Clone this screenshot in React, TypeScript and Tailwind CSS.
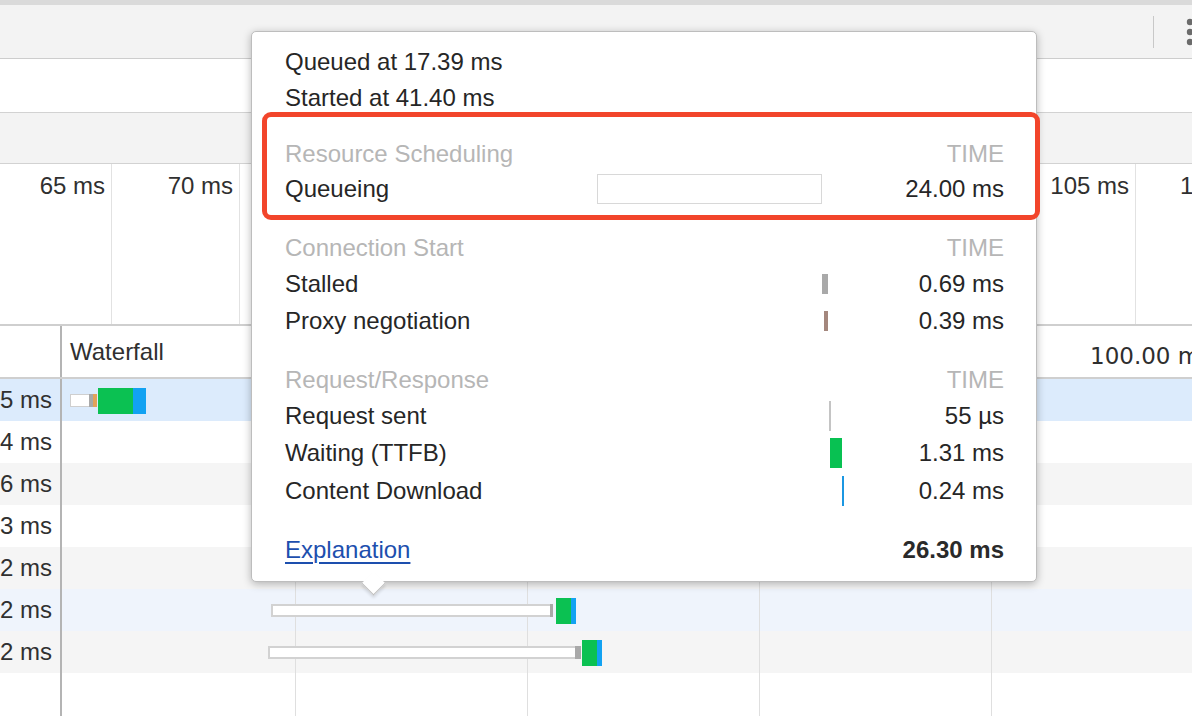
import React from "react";

type PRowProps = {
  h: string;
  label: string;
  time?: string;
  bar?: React.ReactNode;
  head?: boolean;
  extra?: string;
};

function PRow({ h, label, time, bar, head, extra = "" }: PRowProps) {
  return (
    <div className={`flex items-center ${h} ${extra}`}>
      <div className={`w-[312px] whitespace-nowrap ${head ? "text-[#b6b6b6]" : "text-[#262626]"}`}>{label}</div>
      <div className="w-[253px] h-full flex items-center">{bar}</div>
      <div className={`w-[154px] text-right whitespace-nowrap ${head ? "text-[#b6b6b6]" : "text-[#262626]"}`}>{time}</div>
    </div>
  );
}

const overview = ["70 ms", "75 ms", "80 ms", "85 ms", "90 ms", "95 ms", "100 ms", "105 ms", "110 ms"];

const rows = [
  { t: "5 ms", bg: "bg-[#dcebfc]" },
  { t: "4 ms", bg: "bg-white" },
  { t: "6 ms", bg: "bg-[#f5f5f5]" },
  { t: "3 ms", bg: "bg-white" },
  { t: "2 ms", bg: "bg-[#f5f5f5]" },
  { t: "2 ms", bg: "bg-[#eff4fc]" },
  { t: "2 ms", bg: "bg-[#f5f5f5]" },
];

function WaterfallBars({ i }: { i: number }) {
  if (i === 0) {
    return (
      <>
        <div className="absolute left-[8px] top-[15px] w-[20px] h-[13px] bg-white border border-[#cfcfcf] z-10" />
        <div className="absolute left-[27px] top-[15px] w-[4px] h-[13px] bg-[#a9a9a9] z-10" />
        <div className="absolute left-[31px] top-[15px] w-[4px] h-[13px] bg-[#e2a35a] z-10" />
        <div className="absolute left-[36px] top-[9px] w-[35px] h-[26px] bg-[#0bc152] z-10" />
        <div className="absolute left-[71px] top-[9px] w-[13px] h-[26px] bg-[#12a2f2] z-10" />
      </>
    );
  }
  if (i === 5) {
    return (
      <>
        <div className="absolute left-[209px] top-[15px] w-[281px] h-[13px] bg-white border-2 border-[#d2d2d2] z-10" />
        <div className="absolute left-[488px] top-[15px] w-[3px] h-[13px] bg-[#a9a9a9] z-10" />
        <div className="absolute left-[494px] top-[9px] w-[15px] h-[26px] bg-[#0bc152] z-10" />
        <div className="absolute left-[509px] top-[9px] w-[5px] h-[26px] bg-[#12a2f2] z-10" />
      </>
    );
  }
  if (i === 6) {
    return (
      <>
        <div className="absolute left-[206px] top-[15px] w-[309px] h-[13px] bg-white border-2 border-[#d2d2d2] z-10" />
        <div className="absolute left-[513px] top-[15px] w-[6px] h-[13px] bg-[#a9a9a9] z-10" />
        <div className="absolute left-[520px] top-[9px] w-[15px] h-[26px] bg-[#0bc152] z-10" />
        <div className="absolute left-[535px] top-[9px] w-[5px] h-[26px] bg-[#12a2f2] z-10" />
      </>
    );
  }
  return null;
}

export default function App() {
  return (
    <div className="relative w-[1192px] h-[716px] overflow-hidden bg-white font-['Liberation_Sans',Arial,sans-serif] text-[24px] text-[#303030] flex flex-col">
      {/* top strip */}
      <div className="h-[5px] bg-[#dadada] shrink-0" />
      {/* toolbar */}
      <div className="h-[54px] shrink-0 bg-[#f3f3f3] border-b border-[#cdcdcd] flex items-center">
        <div className="flex-1" />
        <div className="w-px h-[32px] bg-[#c8c8c8] shrink-0" />
        <div className="w-[38px] shrink-0 h-full flex items-center pl-[31px]">
          <svg width="10" height="30" viewBox="0 0 10 30" className="shrink-0 overflow-visible">
            <circle cx="5" cy="5" r="3.2" fill="#6b6b6b" />
            <circle cx="5" cy="15" r="3.2" fill="#6b6b6b" />
            <circle cx="5" cy="25" r="3.2" fill="#6b6b6b" />
          </svg>
        </div>
      </div>
      {/* filter bar */}
      <div className="h-[54px] shrink-0 bg-white border-b border-[#d2d2d2]" />
      {/* gray bar */}
      <div className="h-[51px] shrink-0 bg-[#f3f3f3] border-b border-[#d2d2d2]" />
      {/* overview */}
      <div className="h-[162px] shrink-0 border-b-2 border-[#cfcfcf] flex">
        <div className="w-[112px] shrink-0 border-r border-[#e2e2e2] text-right pr-[6px] pt-[4px]">65 ms</div>
        {overview.map((l) => (
          <div key={l} className="w-[128px] shrink-0 border-r border-[#e2e2e2] text-right pr-[6px] pt-[4px] whitespace-nowrap">
            {l}
          </div>
        ))}
      </div>
      {/* table header */}
      <div className="h-[53px] shrink-0 flex border-b-2 border-[#cfcfcf]">
        <div className="w-[62px] shrink-0 border-r-2 border-[#b4b4b4]" />
        <div className="flex items-center">
          <div className="w-[1028px] shrink-0 pl-[8px]">Waterfall</div>
          <div className="shrink-0 whitespace-nowrap font-['DejaVu_Sans',sans-serif] text-[23px] text-[#2e2e2e] pt-[9px]">100.00 ms</div>
        </div>
      </div>
      {/* body */}
      <div className="relative flex-1 flex flex-col">
        {rows.map((r, i) => (
          <div key={i} className={`h-[42px] shrink-0 flex ${r.bg}`}>
            <div className="w-[62px] shrink-0 border-r-2 border-[#b4b4b4] text-right pr-[8px] flex items-center justify-end">
              {r.t}
            </div>
            <div className="relative flex-1">
              <WaterfallBars i={i} />
            </div>
          </div>
        ))}
        <div className="flex-1 flex">
          <div className="w-[62px] shrink-0 border-r-2 border-[#b4b4b4]" />
        </div>
        {/* waterfall grid lines */}
        <div className="absolute left-[295px] top-0 bottom-0 w-px bg-[#dfdfdf] z-[5]" />
        <div className="absolute left-[527px] top-0 bottom-0 w-px bg-[#dfdfdf] z-[5]" />
        <div className="absolute left-[759px] top-0 bottom-0 w-px bg-[#dfdfdf] z-[5]" />
        <div className="absolute left-[991px] top-0 bottom-0 w-px bg-[#dfdfdf] z-[5]" />
      </div>

      {/* popup */}
      <div className="absolute left-[251px] top-[31px] w-[786px] h-[551px] z-30 bg-white border border-[#bdbdbd] rounded-[5px] shadow-[0_2px_8px_rgba(0,0,0,0.28)] pt-[12px] pl-[33px] pr-[32px] flex flex-col">
        <div className="h-[36px] flex items-center text-[#262626]">Queued at 17.39 ms</div>
        <div className="h-[36px] flex items-center text-[#262626]">Started at 41.40 ms</div>
        <PRow h="h-[36px]" extra="mt-[20px]" head label="Resource Scheduling" time="TIME" />
        <PRow
          h="h-[34px]"
          label="Queueing"
          time="24.00 ms"
          bar={<div className="w-[225px] h-[30px] bg-white border border-[#d8d8d8]" />}
        />
        <PRow h="h-[36px]" extra="mt-[24px]" head label="Connection Start" time="TIME" />
        <PRow
          h="h-[36px]"
          label="Stalled"
          time="0.69 ms"
          bar={<div className="ml-[225px] w-[6px] h-[20px] bg-[#a9a9a9]" />}
        />
        <PRow
          h="h-[38px]"
          label="Proxy negotiation"
          time="0.39 ms"
          bar={<div className="ml-[227px] w-[4px] h-[20px] bg-[#a4877d]" />}
        />
        <PRow h="h-[36px]" extra="mt-[22px]" head label="Request/Response" time="TIME" />
        <PRow
          h="h-[36px]"
          label="Request sent"
          time="55 µs"
          bar={<div className="ml-[232px] w-[2px] h-[30px] bg-[#c4c4c4]" />}
        />
        <PRow
          h="h-[38px]"
          label="Waiting (TTFB)"
          time="1.31 ms"
          bar={<div className="ml-[233px] w-[12px] h-[30px] bg-[#08c152]" />}
        />
        <PRow
          h="h-[38px]"
          label="Content Download"
          time="0.24 ms"
          bar={<div className="ml-[245px] w-[2px] h-[30px] bg-[#1b97e2]" />}
        />
        <div className="mt-[22px] h-[36px] flex items-center justify-between">
          <span className="text-[#1d4fae] underline decoration-[2px] underline-offset-[4px]">Explanation</span>
          <span className="font-bold text-[#2a2a2a]">26.30 ms</span>
        </div>

        {/* red annotation box */}
        <div className="absolute left-[10px] top-[80px] w-[778px] h-[108px] border-[5px] border-[#f2452b] rounded-[9px] pointer-events-none" />
        {/* arrow */}
        <div className="absolute left-[113px] bottom-[-11px] w-[17px] h-[17px] bg-white rotate-45 border-r border-b border-[#bdbdbd] shadow-[2px_2px_3px_rgba(0,0,0,0.12)]" />
      </div>
    </div>
  );
}
